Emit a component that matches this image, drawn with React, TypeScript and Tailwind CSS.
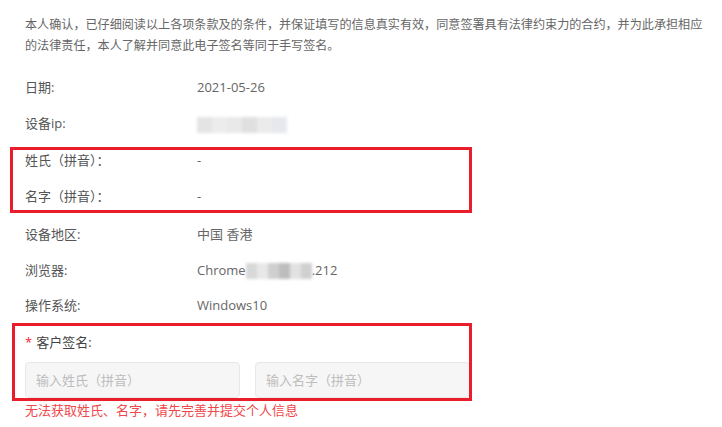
const font = { fontFamily: '"Open Sans","Noto Sans CJK SC",sans-serif' };

function Row({ label, children, h = "h-9" }: { label: string; children?: React.ReactNode; h?: string }) {
  return (
    <div className={`flex items-center ${h}`}>
      <div className="w-[172px] text-[13px] text-[#555]">{label}</div>
      <div className="text-[13px] text-[#666]">{children}</div>
    </div>
  );
}

function Blur({ w, tones }: { w: number; tones: string[] }) {
  return (
    <span className="inline-flex h-[16px] align-middle blur-[1.5px]" style={{ width: w }}>
      {tones.map((t, i) => (
        <span key={i} className="h-full flex-1" style={{ background: t }} />
      ))}
    </span>
  );
}

export default function App() {
  return (
    <div className="w-[722px] h-[427px] bg-white overflow-hidden pl-[25px]" style={font}>
      <div className="pt-[14px] text-[12.1px] leading-[21px] text-[#666] whitespace-nowrap">
        <p>本人确认，已仔细阅读以上各项条款及的条件，并保证填写的信息真实有效，同意签署具有法律约束力的合约，并为此承担相应</p>
        <p>的法律责任，本人了解并同意此电子签名等同于手写签名。</p>
      </div>

      <div className="mt-[14px]">
        <Row label="日期:">2021-05-26</Row>
        <Row label="设备ip:">
          <Blur w={90} tones={["#e4e4e4", "#ececec", "#e9e9e9", "#e0e0e0", "#ebebeb", "#e6e8ee"]} />
        </Row>
      </div>

      <div className="mt-[5px] -ml-[15px] w-[462px] border-[3px] border-[#ea1d2c] pl-[12px] pb-[2px] flex flex-col gap-[14px]">
        <Row label="姓氏（拼音）：" h="h-[22px]">-</Row>
        <Row label="名字（拼音）：" h="h-[22px]">-</Row>
      </div>

      <div className="mt-[4px]">
        <Row label="设备地区:">中国 香港</Row>
        <Row label="浏览器:">
          <span className="inline-flex items-center">
            Chrome
            <Blur w={66} tones={["#d8d8d8", "#e8e8e8", "#cfcfcf", "#bdbdbd", "#e2e2e2", "#d0d0d0"]} />
            .212
          </span>
        </Row>
        <Row label="操作系统:" h="h-[34px]">Windows10</Row>
      </div>

      <div className="-ml-[13px] w-[460px] border-[3px] border-[#ea1d2c] pl-[10px] pt-[6px] overflow-hidden">
        <div className="h-[22px] flex items-center text-[13px] text-[#444]">
          <span className="text-[#f5222d] mr-[4px]">*</span>客户签名:
        </div>
        <div className="mt-[8px] flex gap-[15px]">
          <input
            className="shrink-0 w-[215px] h-[36px] rounded-[4px] border border-[#e8e8e8] bg-[#f6f6f6] px-[10px] text-[13px] placeholder:text-[#bdbdbd] outline-none"
            placeholder="输入姓氏（拼音）"
            style={font}
          />
          <input
            className="shrink-0 w-[215px] h-[36px] rounded-[4px] border border-[#e8e8e8] bg-[#f6f6f6] px-[10px] text-[13px] placeholder:text-[#bdbdbd] outline-none"
            placeholder="输入名字（拼音）"
            style={font}
          />
        </div>
      </div>

      <div className="h-[20px] flex items-center text-[13px] text-[#f0474b]">
        无法获取姓氏、名字，请先完善并提交个人信息
      </div>
    </div>
  );
}
